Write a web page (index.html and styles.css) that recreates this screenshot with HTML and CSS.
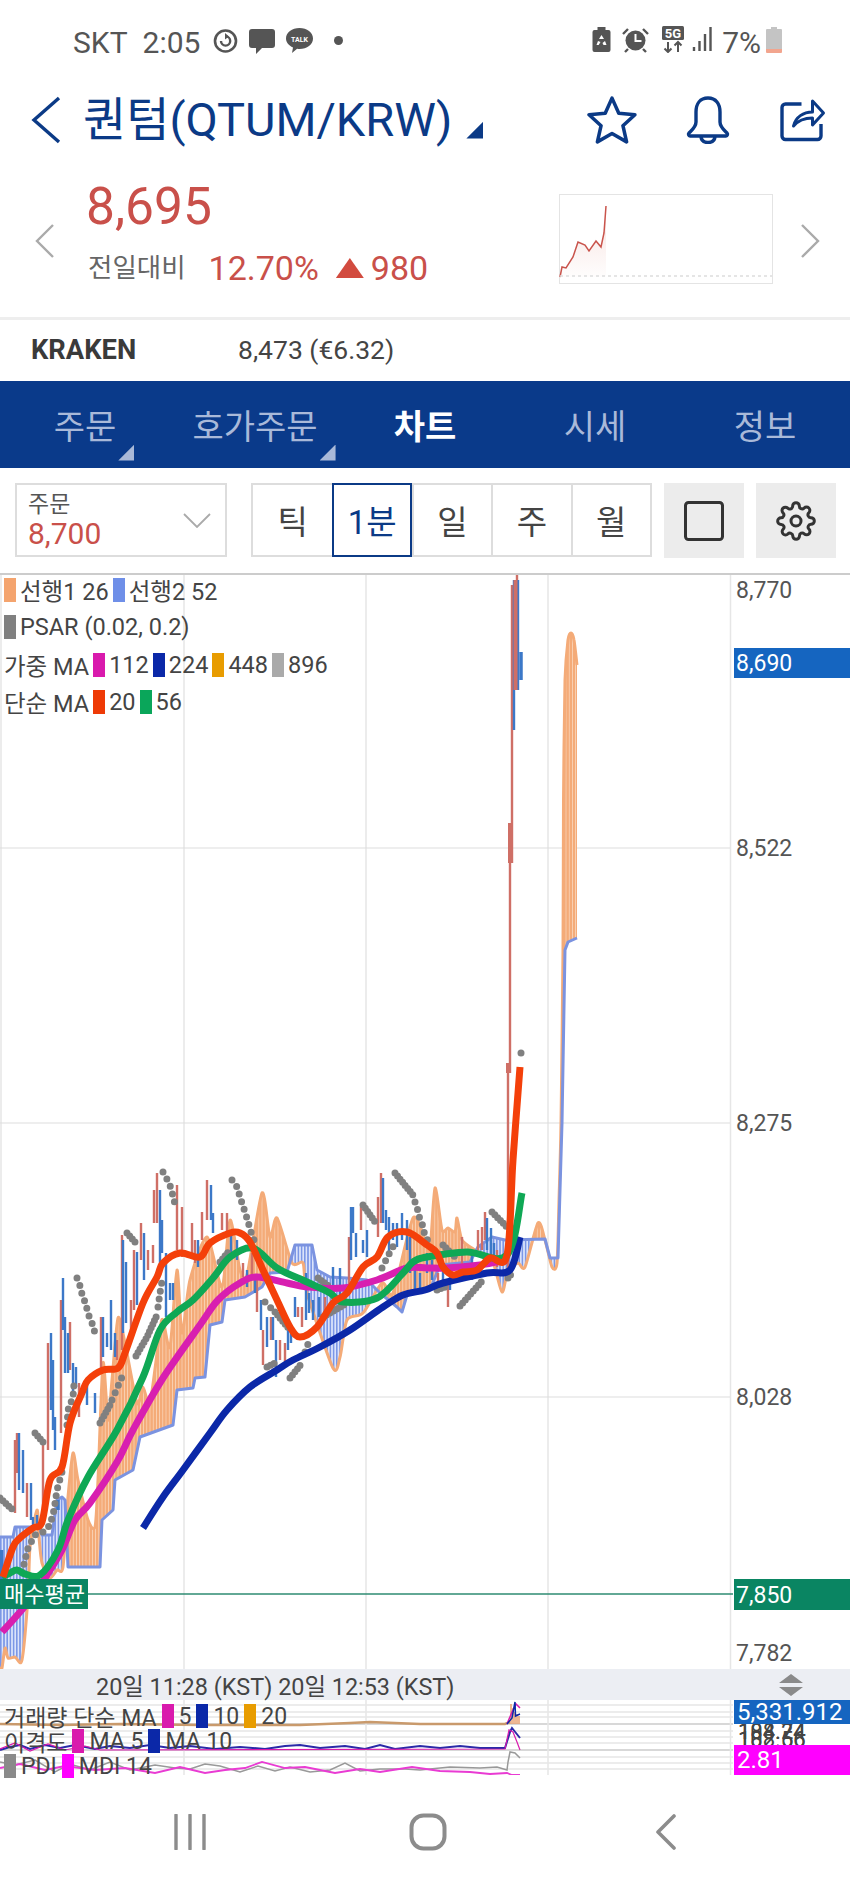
FILE: index.html
```html
<!DOCTYPE html>
<html lang="ko">
<head>
<meta charset="utf-8">
<title>퀀텀(QTUM/KRW)</title>
<link rel="stylesheet" href="styles.css">
</head>
<body>
<div class="screen">

  <header class="status">
    <div class="status-group">
      <span class="status-text">SKT</span>
      <span class="status-text clock">2:05</span>
      <svg class="st-sync" width="25" height="26" viewBox="0 0 25 26"><circle cx="12.5" cy="13" r="10.5" fill="none" stroke="#555" stroke-width="2.6"/><path d="M8 13a4.6 4.6 0 1 0 4.6-4.6" fill="none" stroke="#555" stroke-width="2.4"/><path d="M12 5l4 3.4-4 3.2z" fill="#555"/></svg>
      <svg class="st-msg" width="26" height="25" viewBox="0 0 26 25"><path d="M3 0h20a3 3 0 0 1 3 3v13a3 3 0 0 1-3 3H13l-6 6v-6H3a3 3 0 0 1-3-3V3a3 3 0 0 1 3-3z" fill="#555"/></svg>
      <svg class="st-talk" width="27" height="25" viewBox="0 0 27 25"><path d="M13.5 0C21 0 27 4.600 27 10.500S21 21 13.500 21c-.8 0-1.600-.1-2.400-.2L6 25l1-5.600C2.800 17.500 0 14.300 0 10.500 0 4.600 6 0 13.500 0z" fill="#555"/><text class="talk-label" x="13.500" y="14">TALK</text></svg>
      <span class="st-dot"></span>
    </div>
    <div class="status-group status-right">
      <svg width="19" height="25" viewBox="0 0 18 25"><path d="M5 0h8v3h3a2 2 0 0 1 2 2v18a2 2 0 0 1-2 2H2a2 2 0 0 1-2-2V5a2 2 0 0 1 2-2h3z" fill="#555"/><path d="M9 8l2.500 4H6.500zM5.500 14l2.500 1-1.800 3H4zM12.500 14l1.500 4h-3l-1-2z" fill="#fff"/></svg>
      <svg class="st-alarm" width="29" height="26" viewBox="0 0 27 26"><path d="M1 7l5-5M26 7l-5-5M6 22l-3 3M21 22l3 3" stroke="#555" stroke-width="2.400" fill="none"/><circle cx="13.500" cy="13.500" r="10" fill="#555"/><path d="M13.500 7v7h6" stroke="#fff" stroke-width="2" fill="none"/></svg>
      <svg class="st-net" width="22" height="27" viewBox="0 0 22 27"><rect width="22" height="14" rx="1.500" fill="#555"/><text class="net-label" x="11" y="12">5G</text><path d="M6 16v10M2.500 22.500L6 26l3.500-3.500M16 26V16M12.500 19.500L16 16l3.500 3.500" stroke="#555" stroke-width="2" fill="none"/></svg>
      <svg class="st-signal" width="20" height="24" viewBox="0 0 20 24"><path d="M2 24v-4M7.500 24V14M13 24V7M18.500 24V0" stroke="#555" stroke-width="2.400"/></svg>
      <span class="status-text pct">7%</span>
      <svg class="st-batt" width="16" height="26" viewBox="0 0 16 26"><path d="M5 0h6v2h4a1 1 0 0 1 1 1v19H0V3a1 1 0 0 1 1-1h4z" fill="#c4c4c4"/><path d="M0 22h16v3a1 1 0 0 1-1 1H1a1 1 0 0 1-1-1z" fill="#f2a58e"/></svg>
    </div>
  </header>

  <div class="title-bar">
    <svg class="back" width="30" height="48" viewBox="0 0 30 48"><path d="M28 2L3 24l25 22" fill="none" stroke="#0b3a86" stroke-width="3.400"/></svg>
    <h1 class="title">퀀텀(QTUM/KRW)</h1>
    <span class="title-caret"></span>
    <div class="title-actions">
      <svg width="50" height="48" viewBox="0 0 48 46"><path d="M24 2l6.500 14.500L46 18 34.500 28.500 38 44l-14-8-14 8 3.500-15.500L2 18l15.500-1.500z" fill="none" stroke="#0b3a86" stroke-width="3.400" stroke-linejoin="round"/></svg>
      <svg width="44" height="48" viewBox="0 0 44 48"><path d="M22 2c-8 0-12 6-12 14v10c0 5-4 8-7 11-1 1-.5 3 1 3h36c1.500 0 2-2 1-3-3-3-7-6-7-11V16c0-8-4-14-12-14z" fill="none" stroke="#0b3a86" stroke-width="3.400" stroke-linejoin="round"/><path d="M15 40c0 5 3 6.500 7 6.500s7-1.500 7-6.500" fill="none" stroke="#0b3a86" stroke-width="3.400"/></svg>
      <svg width="47" height="44" viewBox="0 0 46 44"><path d="M22 6H6a3.500 3.500 0 0 0-3.500 3.500V38A3.500 3.500 0 0 0 6 41.500h32a3.500 3.500 0 0 0 3.500-3.500V26" fill="none" stroke="#0b3a86" stroke-width="3.400"/><path d="M14 28c2-9 10-14 19-14V3l11 12-11 12v-7c-8 0-14 2-19 8z" fill="none" stroke="#0b3a86" stroke-width="3" stroke-linejoin="round"/></svg>
    </div>
  </div>

  <section class="quote">
    <svg class="pager" width="20" height="34" viewBox="0 0 20 34"><path d="M18 1L2 17l16 16" fill="none" stroke="#aaa" stroke-width="2.400"/></svg>
    <div class="quote-main">
      <div class="price">8,695</div>
      <div class="change-row">
        <span class="change-label">전일대비</span>
        <span class="change-pct">12.70%</span>
        <span class="change-up"></span>
        <span class="change-abs">980</span>
      </div>
    </div>
    <svg class="spark" width="214" height="90" viewBox="558 194 214 90">
      <defs><linearGradient id="sparkFade" x1="0" y1="0" x2="0" y2="1"><stop offset="0" stop-color="#f3d6d2" stop-opacity=".7"/><stop offset="1" stop-color="#f3d6d2" stop-opacity=".05"/></linearGradient></defs>
      <rect x="558.500" y="194.500" width="213" height="89" fill="#fff" stroke="#e4e4e4"/>
      <path d="M559 277L561 267 565 268 572 257 577 242 584 245 588 251 595 241 600 247 603 233 605 206V277z" fill="url(#sparkFade)"/>
      <path d="M559 277L561 267 565 268 572 257 577 242 584 245 588 251 595 241 600 247 603 233 605 206" fill="none" stroke="#c9544c" stroke-width="1.500"/>
      <path d="M559 276H771" stroke="#ddd" stroke-width="1.500" stroke-dasharray="3 3"/>
    </svg>
    <svg class="pager" width="20" height="34" viewBox="0 0 20 34"><path d="M2 1l16 16L2 33" fill="none" stroke="#aaa" stroke-width="2.400"/></svg>
  </section>

  <div class="venue">
    <span class="venue-name">KRAKEN</span>
    <span class="venue-price">8,473 (€6.32)</span>
  </div>

  <nav class="tabs">
    <div class="tab"><span class="tab-label has-menu">주문</span></div>
    <div class="tab"><span class="tab-label has-menu">호가주문</span></div>
    <div class="tab tab-active"><span class="tab-label">차트</span></div>
    <div class="tab"><span class="tab-label">시세</span></div>
    <div class="tab"><span class="tab-label">정보</span></div>
  </nav>

  <div class="controls">
    <div class="order-select">
      <div class="order-text">
        <span class="order-label">주문</span>
        <span class="order-price">8,700</span>
      </div>
      <svg width="28" height="15" viewBox="0 0 28 15"><path d="M1 1l13 13L27 1" fill="none" stroke="#aaa" stroke-width="1.800"/></svg>
    </div>
    <div class="periods">
      <span class="period">틱</span>
      <span class="period period-active">1분</span>
      <span class="period">일</span>
      <span class="period">주</span>
      <span class="period">월</span>
    </div>
    <button class="tool-btn"><svg width="40" height="40" viewBox="0 0 40 40"><rect x="1.500" y="1.500" width="37" height="37" rx="3" fill="none" stroke="#333" stroke-width="3"/></svg></button>
    <button class="tool-btn"><svg width="40" height="40" viewBox="0 0 24 24" fill="none" stroke="#333" stroke-width="1.800"><circle cx="12" cy="12" r="3"/><path d="M19.400 15a1.650 1.650 0 0 0 .33 1.820l.06.06a2 2 0 0 1 0 2.830 2 2 0 0 1-2.830 0l-.06-.06a1.650 1.650 0 0 0-1.820-.33 1.650 1.650 0 0 0-1 1.510V21a2 2 0 0 1-2 2 2 2 0 0 1-2-2v-.09A1.650 1.650 0 0 0 9 19.400a1.650 1.650 0 0 0-1.820.33l-.06.06a2 2 0 0 1-2.830 0 2 2 0 0 1 0-2.830l.06-.06a1.650 1.650 0 0 0 .33-1.820 1.650 1.650 0 0 0-1.510-1H3a2 2 0 0 1-2-2 2 2 0 0 1 2-2h.09A1.650 1.650 0 0 0 4.600 9a1.650 1.650 0 0 0-.33-1.820l-.06-.06a2 2 0 0 1 0-2.830 2 2 0 0 1 2.830 0l.06.06a1.650 1.650 0 0 0 1.820.33H9a1.650 1.650 0 0 0 1-1.510V3a2 2 0 0 1 2-2 2 2 0 0 1 2 2v.09a1.650 1.650 0 0 0 1 1.510 1.650 1.650 0 0 0 1.820-.33l.06-.06a2 2 0 0 1 2.830 0 2 2 0 0 1 0 2.830l-.06.06a1.650 1.650 0 0 0-.33 1.820V9a1.650 1.650 0 0 0 1.510 1H21a2 2 0 0 1 2 2 2 2 0 0 1-2 2h-.09a1.650 1.650 0 0 0-1.510 1z"/></svg></button>
  </div>

  <section class="chart">
    <div class="plot">
      <svg class="plot-svg" width="850" height="1094" viewBox="0 575 850 1094">
        <defs>
          <pattern id="hatchWarm" width="3.200" height="10" patternUnits="userSpaceOnUse"><rect width="3.200" height="10" fill="#fad4b8"/><rect width="2.400" height="10" fill="#f4ab78"/></pattern>
          <pattern id="hatchCool" width="3.200" height="10" patternUnits="userSpaceOnUse"><rect width="3.200" height="10" fill="#dbe3fa"/><rect width="1.600" height="10" fill="#7c97e6"/></pattern>
          <clipPath id="aboveLead1"><path id="aboveLead1Shape"/></clipPath>
        </defs>

        <!-- grid -->
        <path class="grid-v" d="M1 575V1669M184 575V1669M366 575V1669M548 575V1669M730.500 575V1669"/>
        <path class="grid-h" d="M0 848H730M0 1123H730M0 1397H730"/>

        <!-- ichimoku cloud; chart.js fills the band between the two leading spans -->
        <path id="cloudWarm" fill="url(#hatchWarm)" fill-rule="evenodd"/>
        <g clip-path="url(#aboveLead1)">
          <path id="cloudCool" fill="url(#hatchCool)" fill-rule="evenodd"/>
        </g>
        <polyline id="lead1" class="lead1" data-curve="0.125" points="0,1668 2,1668 5,1648 8,1658 15,1657 22,1660 28,1597 30,1547 37,1510 39,1537 42,1563 50,1578 57,1570 63,1567 68,1497 73,1453 78,1480 88,1520 95,1527 98,1480 103,1363 108,1420 112,1380 118,1318 125,1343 137,1403 143,1387 150,1403 160,1330 163,1320 170,1347 177,1270 182,1333 190,1280 207,1237 222,1287 230,1220 240,1270 247,1275 262,1193 270,1237 277,1218 292,1263 303,1263 307,1293 333,1368 340,1357 347,1320 363,1313 382,1283 393,1293 413,1218 425,1240 430,1250 435,1188 442,1230 448,1228 455,1232 457,1218 462,1240 475,1250 492,1260 502,1292 508,1270 518,1263 525,1267 538,1223 545,1240 552,1267 557,1263 559,1200 561,1123 563,950 563.500,800 565,680 568,640 571,633 574,640 577,665"/>
        <polyline id="lead2" class="lead2" points="0,1537 13,1537 15,1527 38,1527 40,1528 42,1535 52,1535 57,1500 62,1497 65,1500 68,1567 100,1567 102,1520 113,1510 115,1480 133,1470 140,1437 173,1425 177,1390 193,1388 195,1378 205,1377 210,1325 222,1322 225,1300 245,1297 262,1287 270,1273 287,1272 295,1245 312,1245 317,1270 330,1277 347,1278 367,1280 380,1293 397,1307 402,1312 407,1295 430,1290 440,1265 470,1262 478,1247 492,1237 505,1240 545,1239 550,1258 558,1258 562,1123 565,950 568,942 577,938"/>

        <!-- candles -->
        <path class="wick-up" d="M15 1440V1513M17 1433V1473M27 1483V1517M43 1443V1520M48 1343V1450M61 1300V1433M70 1322V1370M79 1383V1417M101 1317V1370M117 1340V1360M122 1235V1350M131 1300V1337M134 1250V1310M141 1223V1260M148 1250V1270M153 1245V1263M154 1190V1223M157 1173V1223M177 1185V1250M182 1207V1257M192 1223V1253M195 1240V1263M202 1212V1240M207 1180V1220M222 1213V1230M227 1213V1233M243 1263V1277M252 1253V1280M257 1280V1312M263 1330V1365M271 1317V1340M280 1340V1360M285 1343V1363M298 1307V1317M302 1307V1327M325 1297V1317M349 1237V1290M361 1207V1230M378 1197V1237M381 1173V1223M438 1273V1293M448 1283V1307M462 1237V1267M478 1230V1250M482 1227V1250M485 1212V1240M497 1250V1267M508 1063V1270M510 823V1073M512 585V863M517 573V590"/>
        <path class="wick-down" d="M19 1433V1490M23 1450V1493M31 1483V1520M33 1517V1527M37 1515V1530M51 1333V1410M53 1360V1430M55 1417V1450M63 1278V1330M65 1317V1373M68 1333V1373M73 1363V1393M76 1367V1387M87 1380V1405M95 1393V1413M103 1317V1357M107 1333V1347M111 1300V1350M115 1333V1357M123 1240V1333M126 1262V1323M137 1252V1305M144 1233V1280M160 1190V1267M162 1220V1253M166 1253V1317M170 1283V1300M173 1283V1300M198 1240V1267M211 1185V1220M213 1213V1233M231 1230V1260M237 1240V1260M247 1270V1287M255 1277V1293M261 1300V1330M267 1317V1347M273 1317V1340M276 1340V1377M288 1327V1350M291 1330V1343M295 1297V1317M306 1273V1320M309 1293V1313M313 1300V1320M319 1297V1317M333 1267V1303M340 1268V1297M351 1207V1260M353 1207V1233M356 1233V1257M363 1240V1253M367 1230V1257M383 1178V1223M386 1210V1230M389 1217V1253M393 1223V1240M397 1223V1247M402 1213V1240M407 1220V1250M410 1237V1273M415 1270V1290M420 1273V1290M427 1253V1273M432 1260V1280M443 1263V1287M450 1273V1290M465 1263V1280M472 1253V1280M487 1218V1250M491 1228V1255M494 1243V1263M514 580V730M518 580V690"/>
        <path class="body-up" d="M510 823V863M508 1063V1073M515.500 580V690"/>
        <path class="body-down" d="M1.500 1550V1580M521 652V680M58 1500V1510"/>

        <!-- parabolic SAR -->
        <g class="sar">
          <polyline class="dense" points="0,1498 13,1510"/>
          <polyline class="dense" points="35,1433 43,1442"/>
          <polyline class="sparse" points="77,1278 79,1282 82,1294 85,1302 87,1309 89,1316 92,1323 94,1330 97,1338"/>
          <polyline class="dense" points="127,1233 135,1242"/>
          <polyline class="sparse" points="163,1172 168,1181 171,1188 173,1196 175,1204"/>
          <polyline class="sparse" points="22,1572 28,1548 35,1535 43,1532 50,1525 54,1510 57,1490 62,1472"/>
          <polyline class="sparse" points="67,1425 68,1410 73,1397 74,1384"/>
          <polyline class="dense" points="100,1423 110,1405"/>
          <polyline class="sparse" points="112,1400 122,1377"/>
          <polyline class="dense" points="136,1356 147,1337 157,1315"/>
          <polyline class="sparse" points="158,1307 160,1293 162,1281"/>
          <polyline class="dense" points="220,1262 230,1250"/>
          <polyline class="sparse" points="232,1180 237,1187 241,1200 246,1215 251,1232 254,1240"/>
          <polyline class="sparse" points="265,1302 275,1312"/>
          <polyline class="dense" points="275,1312 290,1330"/>
          <polyline class="dense" points="267,1367 275,1363"/>
          <polyline class="dense" points="290,1378 302,1363"/>
          <polyline class="sparse" points="305,1352 308,1344 310,1337"/>
          <polyline class="dense" points="318,1278 330,1287"/>
          <polyline class="dense" points="323,1317 347,1303"/>
          <polyline class="dense" points="363,1205 375,1222"/>
          <polyline class="sparse" points="382,1268 385,1262 390,1252 395,1243"/>
          <polyline class="dense" points="395,1173 413,1195"/>
          <polyline class="sparse" points="415,1202 418,1211 420,1220 423,1226 424,1232 427,1238 429,1247"/>
          <polyline class="dense" points="437,1290 445,1287"/>
          <polyline class="dense" points="443,1245 455,1257"/>
          <polyline class="dense" points="460,1306 483,1280"/>
          <polyline class="dense" points="492,1212 507,1227"/>
          <polyline class="dense" points="508,1278 512,1273"/>
          <circle class="sar-dot" cx="521" cy="1053" r="3.500"/>
        </g>

        <!-- moving averages -->
        <polyline class="ma ma-224" data-curve="0.167" points="143,1528 163,1497 183,1470 210,1433 227,1410 250,1387 277,1370 293,1360 320,1347 350,1330 383,1307 403,1295 425,1290 443,1283 487,1273 510,1270 520,1237"/>
        <polyline class="ma ma-112" data-curve="0.167" points="2,1632 13,1620 30,1600 47,1575 62,1550 75,1520 90,1503 117,1462 133,1430 163,1378 200,1325 218,1300 240,1283 257,1277 287,1283 307,1287 343,1288 377,1280 407,1268 427,1268 447,1268 480,1265 507,1260"/>
        <polyline class="ma ma-56" data-curve="0.167" points="2,1577 10,1573 17,1570 25,1574 40,1575 58,1550 68,1520 88,1477 117,1430 143,1377 160,1330 177,1312 193,1300 213,1278 230,1257 253,1248 277,1268 307,1282 330,1293 343,1302 377,1298 403,1273 413,1262 427,1257 467,1252 507,1255 522,1193"/>
        <polyline class="ma ma-20" data-curve="0.167" points="3,1577 13,1547 20,1538 33,1528 42,1522 50,1480 62,1467 70,1423 82,1393 88,1380 103,1370 118,1368 125,1353 143,1303 157,1277 163,1263 180,1253 200,1257 210,1243 230,1233 240,1233 250,1242 263,1270 277,1300 290,1327 300,1337 317,1327 333,1303 347,1293 363,1267 377,1257 388,1237 407,1232 427,1245 437,1253 443,1267 453,1275 463,1272 477,1270 490,1258 507,1255 513,1160 520,1067"/>

        <!-- average price marker -->
        <path class="avg-line" d="M0 1594H733"/>
        <rect class="avg-tag" x="0" y="1579" width="88" height="30"/>
        <text class="avg-tag-text" x="4" y="1602">매수평균</text>

        <!-- price axis -->
        <text class="axis" x="736" y="598">8,770</text>
        <rect class="axis-last" x="734" y="648" width="116" height="30"/>
        <text class="axis axis-on" x="736" y="671">8,690</text>
        <text class="axis" x="736" y="856">8,522</text>
        <text class="axis" x="736" y="1131">8,275</text>
        <text class="axis" x="736" y="1405">8,028</text>
        <rect class="axis-avg" x="734" y="1579" width="116" height="31"/>
        <text class="axis axis-on" x="736" y="1603">7,850</text>
        <text class="axis" x="736" y="1661">7,782</text>
      </svg>

      <div class="legend">
        <div class="legend-row"><i class="sw sw-lead1"></i><span>선행1 26</span><i class="sw sw-lead2"></i><span>선행2 52</span></div>
        <div class="legend-row"><i class="sw sw-sar"></i><span>PSAR (0.02, 0.2)</span></div>
        <div class="legend-row"><span>가중 MA</span><i class="sw sw-pink"></i><span>112</span><i class="sw sw-navy"></i><span>224</span><i class="sw sw-amber"></i><span>448</span><i class="sw sw-grey"></i><span>896</span></div>
        <div class="legend-row"><span>단순 MA</span><i class="sw sw-red"></i><span>20</span><i class="sw sw-green"></i><span>56</span></div>
      </div>
    </div>

    <div class="date-bar">
      <span class="date-text">20일 11:28 (KST) 20일 12:53 (KST)</span>
      <svg class="resize" width="24" height="22" viewBox="0 0 24 22"><path d="M12 0l12 9H0zM0 13h24l-12 9z" fill="#8a8a8a"/></svg>
    </div>

    <div class="subplot">
      <svg class="plot-svg" width="850" height="75" viewBox="0 1700 850 75">
        <path class="sub-grid" d="M0 1705H733M0 1712H733M0 1717H733M0 1731H733M0 1737H733M0 1743H733M0 1757H733M0 1763H733M0 1769H733"/>
        <path class="sub-grid-strong" d="M0 1724H733M0 1750H733"/>
        <path class="grid-v" d="M184 1700V1775M366 1700V1775M548 1700V1775M730.500 1700V1775"/>

        <!-- volume -->
        <path class="vol-bars" d="M509 1720V1724M511 1704V1724M513 1708V1724M515 1712V1724M517 1714V1724M519 1716V1724"/>
        <polyline class="vol-line" points="0,1724 60,1725 120,1724 200,1725 300,1725 350,1723 370,1722 420,1724 505,1724 510,1722"/>
        <polyline class="vol-ma5" points="507,1724 512,1712 516,1704 520,1708"/>
        <polyline class="vol-ma10" points="507,1724 512,1718 515,1702 515.500,1716 520,1714"/>

        <!-- disparity -->
        <polyline class="disp-a" points="0,1750 10,1747 20,1745 30,1749 45,1745 60,1748 75,1745 95,1749 110,1746 130,1748 150,1745 170,1748 190,1746 215,1749 240,1747 265,1749 285,1746 300,1745 320,1748 345,1746 365,1749 380,1745 395,1749 420,1746 440,1748 460,1746 480,1748 505,1748 510,1732 512,1728 516,1733 520,1738"/>
        <polyline class="disp-b" points="0,1749 15,1743 30,1751 48,1744 65,1750 85,1746 100,1750 505,1749 509,1730 513,1732 517,1742 520,1750"/>

        <!-- directional index -->
        <polyline class="pdi" points="0,1762 15,1765 35,1760 55,1772 70,1764 90,1770 110,1762 130,1770 155,1765 175,1768 190,1769 205,1764 220,1766 240,1772 258,1766 275,1771 290,1767 310,1772 330,1770 345,1763 360,1771 380,1769 405,1769 420,1770 450,1767 480,1768 497,1767 507,1770 508,1762 510,1752 515,1753 520,1758"/>
        <polyline class="mdi" points="0,1768 20,1764 45,1770 65,1766 95,1770 125,1768 155,1773 180,1767 205,1773 225,1770 245,1768 262,1762 285,1768 305,1767 335,1773 360,1769 380,1772 412,1767 440,1771 470,1772 490,1774 507,1773 512,1775 520,1775"/>

        <!-- axis values -->
        <text class="sub-axis sub-axis-muted" x="738" y="1739">104.24</text>
        <text class="sub-axis sub-axis-muted" x="738" y="1739">188.74</text>
        <text class="sub-axis sub-axis-muted" x="738" y="1747">102.56</text>
        <text class="sub-axis sub-axis-muted" x="738" y="1747">188.66</text>
        <rect class="axis-last" x="734" y="1700" width="116" height="24"/>
        <text class="sub-axis sub-axis-on" x="737" y="1720">5,331.912</text>
        <rect class="axis-mdi" x="734" y="1745" width="116" height="30"/>
        <text class="sub-axis sub-axis-on" x="737" y="1768">2.81</text>
      </svg>

      <div class="sub-legend">
        <div class="sub-row"><span>거래량 단순 MA</span><i class="sw sw-pink"></i><span>5</span><i class="sw sw-navy"></i><span>10</span><i class="sw sw-amber"></i><span>20</span></div>
        <div class="sub-row"><span>이격도</span><i class="sw sw-pink"></i><span>MA 5</span><i class="sw sw-navy"></i><span>MA 10</span></div>
        <div class="sub-row"><i class="sw sw-grey-dark"></i><span>PDI</span><i class="sw sw-magenta"></i><span>MDI 14</span></div>
      </div>
    </div>
  </section>

  <nav class="softkeys">
    <svg width="36" height="36" viewBox="0 0 36 36"><path d="M4 1v34M18 1v34M32 1v34" stroke="#8c8c8c" stroke-width="3.400" stroke-linecap="round"/></svg>
    <svg width="38" height="38" viewBox="0 0 38 38"><rect x="2.500" y="2.500" width="33" height="33" rx="12" fill="none" stroke="#8c8c8c" stroke-width="4"/></svg>
    <svg width="22" height="36" viewBox="0 0 22 36"><path d="M19 2L3 18l16 16" fill="none" stroke="#8c8c8c" stroke-width="3.600" stroke-linecap="round" stroke-linejoin="round"/></svg>
  </nav>
</div>
<script src="chart.js"></script>
</body>
</html>
```
FILE: styles.css
```css
* { box-sizing: border-box; }

html, body {
  margin: 0;
  padding: 0;
  background: #fff;
}

body {
  font-family: Roboto, "Noto Sans CJK KR", sans-serif;
  color: #444;
}

.screen {
  width: 850px;
  height: 1889px;
  overflow: hidden;
  display: flex;
  flex-direction: column;
}

/* system status bar */
.status {
  height: 75px;
  flex: none;
  padding: 27px 68px 0 73px;
  display: flex;
  justify-content: space-between;
  align-items: flex-start;
}
.status-group {
  display: flex;
  align-items: flex-start;
}
.status-text {
  margin-top: 1px;
  font-size: 30px;
  line-height: 29px;
  color: #555;
}
.clock { margin-left: 15px; }
.st-sync { margin: 1px 0 0 13px; }
.st-msg { margin: 2px 0 0 11px; }
.st-talk { margin: 1px 0 0 11px; }
.st-dot {
  width: 9px;
  height: 9px;
  margin: 9px 0 0 21px;
  border-radius: 50%;
  background: #555;
}
.talk-label {
  font: 700 7px Roboto, sans-serif;
  fill: #fff;
  text-anchor: middle;
}
.net-label {
  font: 700 13px Roboto, sans-serif;
  fill: #fff;
  text-anchor: middle;
}
.st-alarm { margin-left: 10px; }
.st-net { margin: -1px 0 0 12px; }
.st-signal { margin-left: 8px; }
.pct { margin-left: 10px; }
.st-batt { margin-left: 5px; }

/* instrument title */
.title-bar {
  height: 90px;
  flex: none;
  display: flex;
  align-items: center;
  padding: 0 24px 0 31px;
}
.title {
  margin: 0 0 0 22px;
  font-size: 47px;
  font-weight: 400;
  line-height: 50px;
  color: #0b3a86;
  white-space: nowrap;
}
.title-caret {
  width: 17px;
  height: 17px;
  margin: 20px 0 0 14px;
  background: #0b3a86;
  clip-path: polygon(100% 0, 100% 100%, 0 100%);
}
.title-actions {
  margin-left: auto;
  display: flex;
  align-items: center;
  gap: 49px;
}

/* price summary */
.quote {
  height: 152px;
  flex: none;
  display: flex;
  align-items: center;
  padding: 0 30px 0 35px;
}
.quote-main {
  margin: 0 0 17px 33px;
  flex: 1;
}
.price {
  margin-left: -2px;
  font-size: 51.500px;
  line-height: 56px;
  color: #c9504a;
}
.change-row {
  display: flex;
  align-items: center;
  margin-top: 15px;
}
.change-label {
  font-size: 26.500px;
  line-height: 36px;
  color: #666;
}
.change-pct,
.change-abs {
  font-size: 34px;
  line-height: 36px;
  color: #c9504a;
}
.change-pct { margin-left: 23px; }
.change-abs { margin-left: 7px; }
.change-up {
  width: 28px;
  height: 20px;
  margin-left: 17px;
  background: #d24b3f;
  clip-path: polygon(50% 0, 100% 100%, 0 100%);
}
.spark { margin: 0 27px 4px 0; }

/* exchange reference price */
.venue {
  height: 64px;
  flex: none;
  border-top: 3px solid #eee;
  display: flex;
  align-items: center;
  padding: 0 0 2px 31px;
}
.venue-name {
  width: 207px;
  font-size: 27.300px;
  font-weight: 700;
  color: #3a3a3a;
}
.venue-price {
  font-size: 26.500px;
  color: #444;
}

/* section tabs */
.tabs {
  height: 87px;
  flex: none;
  background: #0a3a8a;
  display: grid;
  grid-template-columns: repeat(5, 170px);
}
.tab {
  display: flex;
  justify-content: center;
  align-items: center;
  padding-top: 4px;
  font-size: 34px;
  color: #a9b9d9;
}
.tab-active {
  color: #fff;
  font-weight: 700;
}
.tab-label {
  position: relative;
  line-height: 40px;
}
.has-menu::after {
  content: "";
  position: absolute;
  left: 100%;
  bottom: -14px;
  width: 16px;
  height: 16px;
  margin-left: 2px;
  background: #a9b9d9;
  clip-path: polygon(100% 0, 100% 100%, 0 100%);
}

/* chart controls */
.controls {
  height: 105px;
  flex: none;
  display: flex;
  align-items: flex-start;
  padding: 15px 0 0 15px;
}
.order-select {
  width: 212px;
  height: 74px;
  border: 2px solid #ddd;
  display: flex;
  align-items: center;
  justify-content: space-between;
  padding: 0 14px 0 11px;
}
.order-text {
  display: flex;
  flex-direction: column;
}
.order-label {
  font-size: 23px;
  line-height: 27px;
  color: #555;
}
.order-price {
  font-size: 30px;
  line-height: 31px;
  color: #c9504a;
}
.periods {
  width: 401px;
  height: 74px;
  margin-left: 24px;
  border: 2px solid #ddd;
  display: grid;
  grid-template-columns: repeat(5, 1fr);
}
.period {
  display: flex;
  align-items: center;
  justify-content: center;
  font-size: 33px;
  color: #444;
  border-left: 2px solid #ddd;
}
.period:first-child { border-left: 0; }
.period-active {
  margin: -2px 0;
  border: 2px solid #0b3a86;
  color: #0b3a86;
}
.tool-btn {
  width: 80px;
  height: 75px;
  margin-left: 12px;
  padding: 0;
  border: 0;
  background: #ececec;
  display: flex;
  align-items: center;
  justify-content: center;
}

/* chart */
.chart {
  flex: none;
  border-top: 2px solid #ccc;
}
.plot,
.subplot {
  position: relative;
}
.plot { height: 1094px; }
.subplot { height: 75px; }
.plot-svg { display: block; }

.grid-v {
  fill: none;
  stroke: #e6e6e6;
  stroke-width: 1.5;
}
.grid-h {
  fill: none;
  stroke: #ddd;
  stroke-width: 1;
}
.lead1,
.lead2 {
  fill: none;
  stroke-width: 3;
  stroke-linejoin: round;
}
.lead1 { stroke: #f4ab78; }
.lead2 { stroke: #7b93e0; }

.wick-up,
.wick-down,
.body-up,
.body-down {
  fill: none;
}
.wick-up { stroke: #cf6f66; stroke-width: 2.400; }
.wick-down { stroke: #3c78c8; stroke-width: 2.400; }
.body-up { stroke: #cf6f66; stroke-width: 4; }
.body-down { stroke: #3c78c8; stroke-width: 3.5; }

.sar polyline {
  fill: none;
  stroke: #808080;
  stroke-width: 7;
  stroke-linecap: round;
}
.sar .dense { stroke-dasharray: 0 4; }
.sar .sparse { stroke-dasharray: 0 8; }
.sar-dot { fill: #808080; }

.ma {
  fill: none;
  stroke-width: 7;
  stroke-linejoin: round;
}
.ma-20 { stroke: #f4400a; }
.ma-56 { stroke: #0fa855; }
.ma-112 { stroke: #d81fb0; }
.ma-224 { stroke: #0b28a8; }

.avg-line {
  stroke: #2e8b72;
  stroke-width: 1.5;
}
.avg-tag { fill: #0a8562; }
.avg-tag-text {
  font: 22px "Noto Sans CJK KR", sans-serif;
  fill: #fff;
}

.axis {
  font: 23px Roboto, sans-serif;
  fill: #555;
}
.axis-on { fill: #fff; }
.axis-last { fill: #1565c0; }
.axis-avg { fill: #0a8562; }
.axis-mdi { fill: #ff00ff; }

/* indicator legends */
.legend {
  position: absolute;
  top: 0;
  left: 4px;
  display: flex;
  flex-direction: column;
  gap: 7.3px;
}
.legend-row {
  height: 30px;
  display: flex;
  align-items: center;
  gap: 4px;
  font-size: 23.500px;
  color: #444;
  white-space: nowrap;
}
.sw {
  width: 12px;
  height: 24px;
  flex: none;
}
.sw-lead1 { background: #f4a46e; }
.sw-lead2 { background: #6f8fe8; }
.sw-sar { background: #808080; }
.sw-pink { background: #d91aad; }
.sw-navy { background: #0b28a8; }
.sw-amber { background: #e89c00; }
.sw-grey { background: #aaa; }
.sw-red { background: #ee3a06; }
.sw-green { background: #0aa65a; }
.sw-grey-dark { background: #8a8a8a; }
.sw-magenta { background: #ff00ff; }

.date-bar {
  height: 31px;
  background: #eceef3;
  display: flex;
  align-items: center;
  justify-content: space-between;
  padding: 0 47px 0 96px;
}
.date-text {
  font-size: 23.400px;
  color: #444;
}

.sub-grid {
  fill: none;
  stroke: #e6e6e6;
  stroke-width: 1.5;
}
.sub-grid-strong {
  fill: none;
  stroke: #ccc;
  stroke-width: 1.5;
}
.vol-bars {
  fill: none;
  stroke: #e8a070;
  stroke-width: 1.5;
}
.vol-line { fill: none; stroke: #c99a6c; stroke-width: 2.5; }
.vol-ma5 { fill: none; stroke: #d91aad; stroke-width: 1.5; }
.vol-ma10 { fill: none; stroke: #0b28a8; stroke-width: 1.5; }
.disp-a { fill: none; stroke: #2a2aa8; stroke-width: 2; }
.disp-b { fill: none; stroke: #d91aad; stroke-width: 1.2; }
.pdi { fill: none; stroke: #999; stroke-width: 1.5; }
.mdi { fill: none; stroke: #e93bd3; stroke-width: 1.8; }

.sub-axis {
  font: 24px Roboto, sans-serif;
}
.sub-axis-muted {
  font-size: 22px;
  fill: #444;
}
.sub-axis-on { fill: #fff; }

.sub-legend {
  position: absolute;
  top: 4px;
  left: 4px;
  display: flex;
  flex-direction: column;
  gap: 1px;
}
.sub-row {
  height: 24px;
  display: flex;
  align-items: center;
  gap: 5px;
  font-size: 23px;
  color: #444;
  white-space: nowrap;
}

/* navigation keys */
.softkeys {
  flex: 1;
  display: grid;
  grid-template-columns: repeat(3, 238px);
  padding-left: 71px;
  align-items: center;
  justify-items: center;
}
```
FILE: chart.js
```js
// Turns the hand-plotted polylines into smooth curves and fills the
// ichimoku band between the two leading spans.
(function () {
  var NS = 'http://www.w3.org/2000/svg';

  function readPoints(el) {
    return el.getAttribute('points').trim().split(/\s+/).map(function (pair) {
      return pair.split(',').map(Number);
    });
  }

  // Catmull-Rom spline through the points, as cubic Bezier segments.
  function curve(pts, k) {
    var d = 'M' + pts[0][0] + ' ' + pts[0][1];
    for (var i = 0; i < pts.length - 1; i++) {
      var p0 = pts[Math.max(i - 1, 0)];
      var p1 = pts[i];
      var p2 = pts[i + 1];
      var p3 = pts[Math.min(i + 2, pts.length - 1)];
      d += 'C' + (p1[0] + (p2[0] - p0[0]) * k).toFixed(1) + ' ' + (p1[1] + (p2[1] - p0[1]) * k).toFixed(1) +
           ' ' + (p2[0] - (p3[0] - p1[0]) * k).toFixed(1) + ' ' + (p2[1] - (p3[1] - p1[1]) * k).toFixed(1) +
           ' ' + p2[0] + ' ' + p2[1];
    }
    return d;
  }

  function straight(pts) {
    return 'M' + pts.map(function (p) { return p[0] + ' ' + p[1]; }).join('L');
  }

  var lead1 = document.getElementById('lead1');
  var lead2 = document.getElementById('lead2');
  var upper = curve(readPoints(lead1), Number(lead1.dataset.curve));
  var lower = straight(readPoints(lead2));
  var band = upper + 'V1669H0Z' + lower + 'V1669H0Z';

  document.getElementById('cloudWarm').setAttribute('d', band);
  document.getElementById('cloudCool').setAttribute('d', band);
  document.getElementById('aboveLead1Shape').setAttribute('d', upper + 'V575H0Z');

  document.querySelectorAll('polyline[data-curve]').forEach(function (line) {
    var path = document.createElementNS(NS, 'path');
    path.setAttribute('class', line.getAttribute('class'));
    path.setAttribute('d', curve(readPoints(line), Number(line.dataset.curve)));
    line.parentNode.replaceChild(path, line);
  });
})();
```
